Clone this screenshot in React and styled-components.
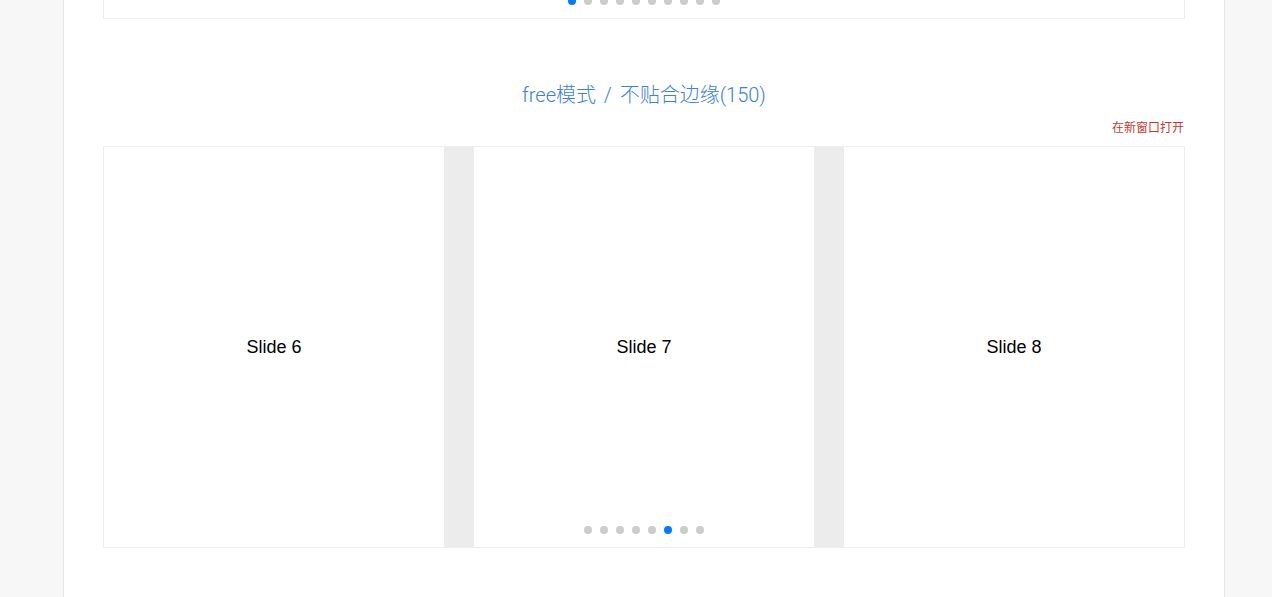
import React from 'react';
import styled, { createGlobalStyle } from 'styled-components';

/* --- STYLES --- */
const GlobalStyle = createGlobalStyle`
  html, body {
    margin: 0;
    padding: 0;
    background: #f7f7f7;
    font-family: "Liberation Sans", "Noto Sans CJK SC", sans-serif;
    overflow: hidden;
  }
`;

const Column = styled.main`
  box-sizing: border-box;
  width: 1162px;
  margin-left: 63px;
  padding: 0 39px 80px;
  background: #fff;
  border-left: 1px solid #e5e5e5;
  border-right: 1px solid #e5e5e5;
  min-height: 800px;
`;

const Section = styled.section`
  display: flex;
  flex-direction: column;
`;

const Title = styled.h2`
  margin: 61px 0 0;
  text-align: center;
  font-family: Roboto, "Noto Sans CJK SC", sans-serif;
  font-size: 20px;
  font-weight: 300;
  line-height: 30px;
  word-spacing: 3px;
  color: #3a80dc;
`;

const OpenLink = styled.a`
  align-self: flex-end;
  margin: 8px 1px 10px 0;
  font-family: "Noto Sans CJK SC", sans-serif;
  font-size: 12px;
  line-height: 18px;
  color: #c53a2f;
  text-decoration: none;
  cursor: pointer;
`;

const SliderBox = styled.div`
  position: relative;
  box-sizing: border-box;
  height: ${p => p.$height}px;
  border: 1px solid #eeeeee;
  border-top: ${p => (p.$tail ? 'none' : '1px solid #eeeeee')};
  background: #ececec;
  overflow: hidden;
`;

const Track = styled.div`
  display: flex;
  gap: 30px;
  height: 100%;
`;

const Slide = styled.div`
  flex: 0 0 ${p => p.$width}px;
  display: flex;
  align-items: center;
  justify-content: center;
  background: #fff;
  font-size: 18px;
  color: #000;
`;

const Pagination = styled.div`
  position: absolute;
  left: 0;
  right: 0;
  bottom: 13px;
  display: flex;
  justify-content: center;
  gap: 8px;
`;

const Dot = styled.span`
  flex: 0 0 8px;
  height: 8px;
  border-radius: 50%;
  background: ${p => (p.$active ? '#007aff' : '#cccccc')};
`;

/* --- Component --- */
const Slider = ({ slides, slideWidth, height, tail, dots, active }) => (
  <SliderBox $height={height} $tail={tail}>
    <Track>
      {slides.map(n => (
        <Slide key={n} $width={slideWidth}>
          {n}
        </Slide>
      ))}
    </Track>
    <Pagination>
      {Array.from({ length: dots }, (_, i) => (
        <Dot key={i} $active={i === active} />
      ))}
    </Pagination>
  </SliderBox>
);

const App = () => (
  <>
    <GlobalStyle />
    <Column>
      {/* page is scrolled: only the bottom edge of the previous demo shows */}
      <Section>
        <Slider slides={['']} slideWidth={1080} height={19} tail dots={10} active={0} />
      </Section>
      <Section>
        <Title>free模式 / 不贴合边缘(150)</Title>
        <OpenLink>在新窗口打开</OpenLink>
        <Slider
          slides={['Slide 6', 'Slide 7', 'Slide 8']}
          slideWidth={340}
          height={402}
          dots={8}
          active={5}
        />
      </Section>
    </Column>
  </>
);

export default App;
